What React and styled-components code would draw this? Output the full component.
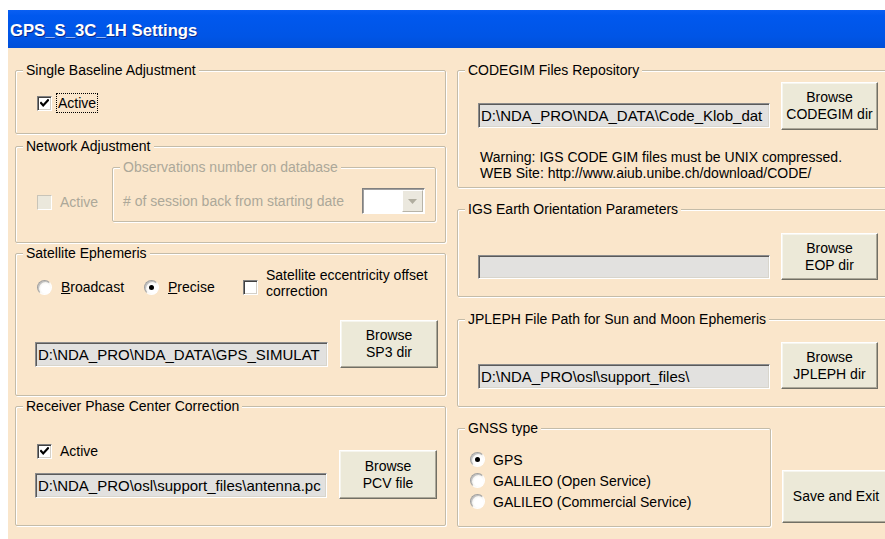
import styled, { createGlobalStyle } from 'styled-components';

const FACE = '#fae6cb';

const GlobalStyle = createGlobalStyle`
  html, body {
    margin: 0;
    padding: 0;
    background: #fff;
    overflow: hidden;
  }
  body {
    font-family: "Liberation Sans", Arial, sans-serif;
    font-size: 14px;
    color: #000;
  }
`

const Window = styled.div`
  margin: 10px 0 0 8px;
  width: 877px;
  height: 529px;
  overflow: hidden;
  display: flex;
  flex-direction: column;
  background: ${FACE};
`

const TitleBar = styled.div`
  flex: none;
  height: 38px;
  box-sizing: border-box;
  padding: 3px 0 0 2px;
  display: flex;
  align-items: center;
  background: linear-gradient(to bottom, #0a5ff2 0%, #0058ee 15%, #0055e6 70%, #004fd8 100%);
  color: #fff;
  font-weight: bold;
  font-size: 16.7px;
  text-shadow: 1px 1px 0 #0b2a8a;
`

const Body = styled.div`
  flex: 1;
  display: flex;
  gap: 11px;
  padding: 22px 0 0 7px;
`

const Column = styled.div`
  flex: none;
  width: ${p => p.$w}px;
  display: flex;
  flex-direction: column;
`

const Group = styled.div`
  position: relative;
  flex: none;
  box-sizing: border-box;
  height: ${p => p.$h}px;
  width: ${p => (p.$w ? `${p.$w}px` : 'auto')};
  margin-top: ${p => p.$mt || 0}px;
  padding: ${p => p.$pad || '0'};
  border: 1px solid #c4bca9;
  border-radius: 2px;
  box-shadow: inset 1px 1px 0 #fff, 1px 1px 0 #fff;
  display: flex;
  flex-direction: ${p => p.$dir || 'column'};
  align-items: flex-start;
`

// caption sits on the top border line of its frame
const Legend = styled.span`
  position: absolute;
  top: -9px;
  left: 7px;
  padding: 0 3px;
  line-height: 16px;
  white-space: nowrap;
  background: ${FACE};
  color: ${p => (p.$disabled ? '#aca899' : '#000')};
`

const Row = styled.div`
  display: flex;
  align-items: ${p => p.$align || 'center'};
  gap: ${p => p.$gap || 0}px;
  margin-top: ${p => p.$mt || 0}px;
  width: ${p => (p.$w ? `${p.$w}px` : 'auto')};
`

const Stack = styled.div`
  display: flex;
  flex-direction: column;
  align-items: flex-start;
`

const Option = styled.label`
  flex: none;
  display: flex;
  align-items: ${p => (p.$top ? 'flex-start' : 'center')};
  gap: ${p => p.$gap || 9}px;
  width: ${p => (p.$w ? `${p.$w}px` : 'auto')};
  height: ${p => (p.$hgt ? `${p.$hgt}px` : 'auto')};
  margin-top: ${p => p.$mt || 0}px;
  line-height: 16px;
  color: ${p => (p.$disabled ? '#aca899' : '#000')};
`

const Box = styled.span`
  flex: none;
  width: 15px;
  height: 15px;
  box-sizing: border-box;
  margin-top: ${p => p.$mt || 0}px;
  background: ${p => (p.$disabled ? '#ebe8dc' : '#fff')};
  border: 1px solid;
  border-color: ${p => (p.$disabled ? '#c8c4b8 #fff #fff #c8c4b8' : '#808080 #fff #fff #808080')};
  box-shadow: ${p => (p.$disabled ? 'none' : 'inset 1px 1px 0 #404040, inset -1px -1px 0 #d4d0c8')};
  display: flex;
  align-items: center;
  justify-content: center;
`

const Round = styled.span`
  flex: none;
  width: 15px;
  height: 15px;
  box-sizing: border-box;
  border-radius: 50%;
  background: radial-gradient(circle at 60% 60%, #fff 40%, #dedbd0 100%);
  border: 1px solid;
  border-color: #a0a0a0 #fff #fff #a0a0a0;
  box-shadow: inset 1px 1px 0 #c0c0c0;
  display: flex;
  align-items: center;
  justify-content: center;
`

const Dot = styled.span`
  width: 5px;
  height: 5px;
  border-radius: 50%;
  background: #000;
`

const Focus = styled.span`
  outline: 1px dotted #000;
  outline-offset: 1px;
`

const Key = styled.span`
  text-decoration: underline;
`

const PathField = styled.div`
  flex: none;
  width: ${p => p.$w}px;
  height: ${p => p.$h || 25}px;
  box-sizing: border-box;
  margin: ${p => p.$m || '0'};
  padding: 0 2px;
  background: #e2e1df;
  border: 1px solid;
  border-color: #8c8c8c #fff #fff #8c8c8c;
  box-shadow: inset 1px 1px 0 #5a5a5a, inset -1px -1px 0 #d8d5cc;
  font-size: 15px;
  line-height: 23px;
  white-space: nowrap;
  overflow: hidden;
`

const Button = styled.button`
  flex: none;
  width: ${p => p.$w || 98}px;
  height: ${p => p.$h || 48}px;
  margin: ${p => p.$m || '0'};
  padding: 0;
  box-sizing: border-box;
  background: #ece9d8;
  border: 1px solid;
  border-color: #fff #716f64 #716f64 #fff;
  box-shadow: inset -1px -1px 0 #aca899, inset 1px 1px 0 #f6f5ee;
  font-family: inherit;
  font-size: 14px;
  line-height: 17px;
  color: #000;
  text-align: center;
`

const Combo = styled.div`
  flex: none;
  width: 63px;
  height: 26px;
  box-sizing: border-box;
  padding: 1px;
  background: #fff;
  border: 1px solid;
  border-color: #808080 #fff #fff #808080;
  box-shadow: inset 1px 1px 0 #a0a0a0;
  display: flex;
  justify-content: flex-end;
`

const ComboButton = styled.span`
  width: 21px;
  height: 100%;
  box-sizing: border-box;
  background: #ebe8de;
  border: 1px solid;
  border-color: #fff #b8b4a8 #b8b4a8 #fff;
  display: flex;
  align-items: center;
  justify-content: center;
`

const Note = styled.p`
  margin: ${p => p.$m || 0};
  line-height: 16px;
  white-space: nowrap;
`

const Tick = () => (
  <svg width="9" height="9" viewBox="0 0 9 9">
    <path d="M1 4 L3.2 6.4 L8 1.2" fill="none" stroke="#000" strokeWidth="2.2" strokeLinecap="square" />
  </svg>
)

const Check = ({ checked, disabled, children, ...rest }) => (
  <Option $disabled={disabled} $gap={8} {...rest}>
    <Box $disabled={disabled}>{checked && <Tick />}</Box>
    {children}
  </Option>
)

const Radio = ({ checked, children, ...rest }) => (
  <Option {...rest}>
    <Round>{checked && <Dot />}</Round>
    <span>{children}</span>
  </Option>
)

const Browse = ({ lines, ...rest }) => (
  <Button {...rest}>
    {lines[0]}
    <br />
    {lines[1]}
  </Button>
)

const App = () => {
  return (
    <>
      <GlobalStyle />
      <Window>
        <TitleBar>GPS_S_3C_1H Settings</TitleBar>
        <Body>
          <Column $w={431}>
            <Group $h={64} $pad="24px 0 0 21px">
              <Legend>Single Baseline Adjustment</Legend>
              <Check checked $gap={6}>
                <Focus>Active</Focus>
              </Check>
            </Group>

            <Group $h={97} $mt={12} $dir="row" $pad="20px 0 0 21px">
              <Legend>Network Adjustment</Legend>
              <Row $w={75} $mt={27}>
                <Check disabled>Active</Check>
              </Row>
              <Group $w={324} $h={55} $pad="20px 10px 0 10px">
                <Legend $disabled>Observations number on database</Legend>
                <Row style={{ width: '100%' }}>
                  <Note style={{ color: '#aca899', flex: 1 }}># of session back from starting date</Note>
                  <Combo>
                    <ComboButton>
                      <svg width="9" height="5" viewBox="0 0 9 5">
                        <path d="M0 0 H9 L4.5 5 Z" fill="#b0ad9f" />
                      </svg>
                    </ComboButton>
                  </Combo>
                </Row>
              </Group>
            </Group>

            <Group $h={143} $mt={10} $pad="13px 0 0 21px">
              <Legend>Satellite Ephemeris</Legend>
              <Row $align="flex-start">
                <Radio $w={107} $mt={12}>
                  <Key>B</Key>roadcast
                </Radio>
                <Radio $w={99} $mt={12} checked>
                  <Key>P</Key>recise
                </Radio>
                <Option $gap={8} $top>
                  <Box $mt={13} />
                  <span>
                    Satellite eccentricity offset
                    <br />
                    correction
                  </span>
                </Option>
              </Row>
              <Row $align="flex-end" $gap={12} $mt={21}>
                <PathField $w={293} $m="0 0 1px -2px">D:\NDA_PRO\NDA_DATA\GPS_SIMULAT</PathField>
                <Browse lines={['Browse', 'SP3 dir']} />
              </Row>
            </Group>

            <Group $h={120} $mt={10} $dir="row" $pad="36px 0 0 21px">
              <Legend>Receiver Phase Center Correction</Legend>
              <Stack>
                <Check checked>Active</Check>
                <PathField $w={292} $m="14px 0 0 -2px">D:\NDA_PRO\osl\support_files\antenna.pc</PathField>
              </Stack>
              <Browse lines={['Browse', 'PCV file']} $h={49} $m="7px 0 0 12px" />
            </Group>
          </Column>

          <Column $w={440}>
            <Group $h={118} $pad="11px 0 0 20px">
              <Legend>CODEGIM Files Repository</Legend>
              <Row $align="flex-end" $gap={11}>
                <PathField $w={292} $m="0 0 2px 0">D:\NDA_PRO\NDA_DATA\Code_Klob_dat</PathField>
                <Browse lines={['Browse', 'CODEGIM dir']} $w={97} />
              </Row>
              <Note $m="19px 0 0 2px">
                Warning: IGS CODE GIM files must be UNIX compressed.
                <br />
                WEB Site: http://www.aiub.unibe.ch/download/CODE/
              </Note>
            </Group>

            <Group $h={88} $mt={21} $pad="23px 0 0 20px">
              <Legend>IGS Earth Orientation Parameters</Legend>
              <Row $align="flex-end" $gap={11}>
                <PathField $w={292} $h={24} $m="0 0 1px 0" />
                <Browse lines={['Browse', 'EOP dir']} $w={97} $h={47} />
              </Row>
            </Group>

            <Group $h={88} $mt={22} $pad="22px 0 0 20px">
              <Legend>JPLEPH File Path for Sun and Moon Ephemeris</Legend>
              <Row $align="flex-end" $gap={11}>
                <PathField $w={292}>D:\NDA_PRO\osl\support_files\</PathField>
                <Browse lines={['Browse', 'JPLEPH dir']} $w={97} $h={47} />
              </Row>
            </Group>

            <Row $align="flex-start" $gap={11} $mt={21}>
              <Group $w={314} $h={99} $pad="20px 0 0 12px">
                <Legend>GNSS type</Legend>
                <Radio checked $hgt={21} $gap={8}>GPS</Radio>
                <Radio $hgt={21} $gap={8}>GALILEO (Open Service)</Radio>
                <Radio $hgt={21} $gap={8}>GALILEO (Commercial Service)</Radio>
              </Group>
              <Button $w={108} $h={53} $m="42px 0 0 0">Save and Exit</Button>
            </Row>
          </Column>
        </Body>
      </Window>
    </>
  )
}

export default App
